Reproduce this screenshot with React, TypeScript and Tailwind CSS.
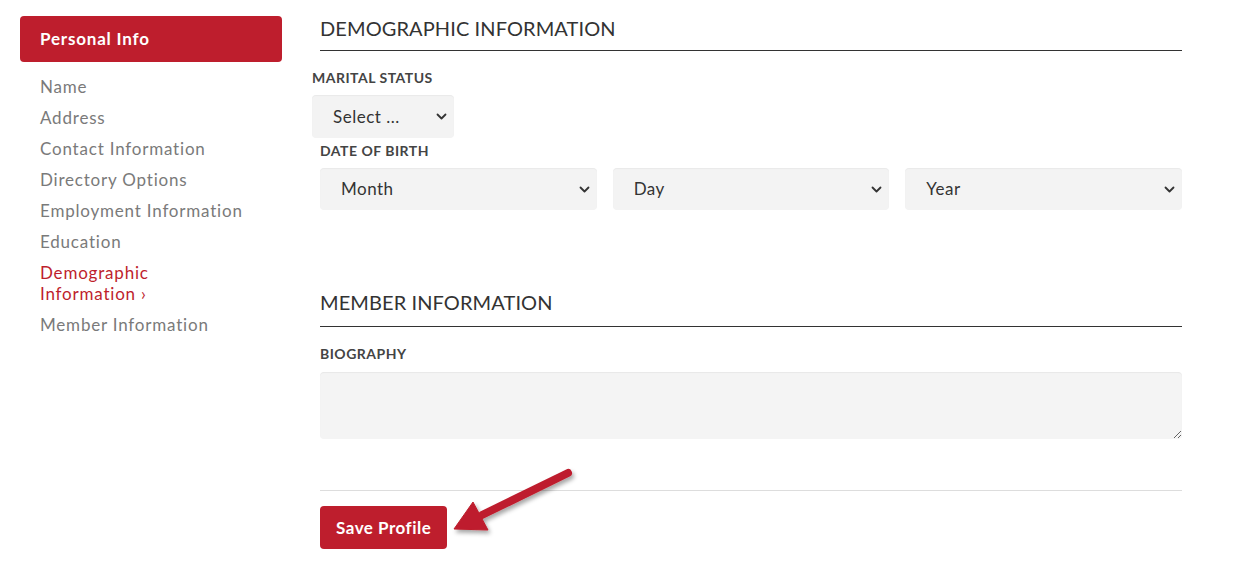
import React from 'react';

const navItems = [
    'Name',
    'Address',
    'Contact Information',
    'Directory Options',
    'Employment Information',
    'Education',
];

function Chevron() {
    return (
        <svg width="11" height="7" viewBox="0 0 11 7" fill="none" className="shrink-0">
            <path d="M1.5 1.5 L5.5 5.5 L9.5 1.5" stroke="#333" strokeWidth="1.8" strokeLinecap="round" strokeLinejoin="round" />
        </svg>
    );
}

function FakeSelect({ label, className }: { label: string; className: string }) {
    return (
        <div className={`flex items-center justify-between bg-[#f3f3f3] rounded-[4px] shadow-[inset_0_1px_1px_rgba(0,0,0,0.04)] text-[17px] tracking-[0.5px] text-[#333] ${className}`}>
            <span>{label}</span>
            <Chevron />
        </div>
    );
}

export default function App() {
    return (
        <div className="relative w-[1253px] h-[586px] bg-white font-['Lato','Open_Sans',sans-serif] overflow-hidden">
            <div className="flex">

                {/* Sidebar */}
                <aside className="w-[262px] ml-[20px] mt-[16px]">
                    <div className="h-[46px] bg-[#be1e2d] rounded-[4px] flex items-center px-[20px] text-white text-[17px] tracking-[0.8px] font-bold">
                        Personal Info
                    </div>
                    <ul className="mt-[9px] pl-[20px] pr-[20px] text-[17px] leading-[21px] tracking-[0.8px] text-[#7a7a7a]">
                        {navItems.map((item) => (
                            <li key={item} className="py-[5px]">{item}</li>
                        ))}
                        <li className="py-[5px] text-[#be1e2d] w-[150px]">Demographic Information ›</li>
                        <li className="py-[5px]">Member Information</li>
                    </ul>
                </aside>

                {/* Main */}
                <main className="ml-[38px] w-[862px] pt-[16px]">
                    <h2 className="text-[20px] leading-[24px] tracking-[0.1px] text-[#333] pb-[10px] border-b border-[#333]">
                        DEMOGRAPHIC INFORMATION
                    </h2>

                    <div className="mt-[18px] -ml-[8px] text-[14px] leading-[18px] tracking-[0.5px] font-bold text-[#444]">MARITAL STATUS</div>
                    <FakeSelect label="Select ..." className="mt-[8px] -ml-[8px] w-[142px] h-[43px] pl-[21px] pr-[7px]" />

                    <div className="mt-[4px] text-[14px] leading-[18px] tracking-[0.5px] font-bold text-[#444]">DATE OF BIRTH</div>
                    <div className="mt-[8px] grid grid-cols-3 gap-[16px]">
                        <FakeSelect label="Month" className="h-[42px] pl-[21px] pr-[7px]" />
                        <FakeSelect label="Day" className="h-[42px] pl-[21px] pr-[7px]" />
                        <FakeSelect label="Year" className="h-[42px] pl-[21px] pr-[7px]" />
                    </div>

                    <h2 className="mt-[80px] text-[20px] leading-[24px] tracking-[0.1px] text-[#333] pb-[12px] border-b border-[#333]">
                        MEMBER INFORMATION
                    </h2>

                    <div className="mt-[18px] text-[14px] leading-[18px] tracking-[0.5px] font-bold text-[#444]">BIOGRAPHY</div>
                    <textarea className="mt-[9px] block w-full h-[67px] bg-[#f4f4f4] rounded-[4px] shadow-[inset_0_1px_1px_rgba(0,0,0,0.05)] outline-none" />

                    <div className="mt-[51px] border-t border-[#dddddd]" />

                    <button className="mt-[15px] h-[43px] px-[16px] bg-[#be1e2d] rounded-[4px] text-white text-[17px] tracking-[0.5px] font-bold">
                        Save Profile
                    </button>
                </main>
            </div>

            {/* Annotation arrow */}
            <svg className="absolute left-[440px] top-[460px]" width="150" height="90" viewBox="0 0 150 90">
                <defs>
                    <filter id="sh" x="-20%" y="-20%" width="150%" height="150%">
                        <feDropShadow dx="2" dy="3" stdDeviation="2" floodColor="#000" floodOpacity="0.35" />
                    </filter>
                </defs>
                <g filter="url(#sh)" fill="#be1e2d" stroke="#be1e2d">
                    <line x1="128" y1="13" x2="42" y2="55" strokeWidth="8" strokeLinecap="round" />
                    <polygon points="14,69 33,42 48,70" strokeWidth="1" strokeLinejoin="round" />
                </g>
            </svg>
        </div>
    );
}
